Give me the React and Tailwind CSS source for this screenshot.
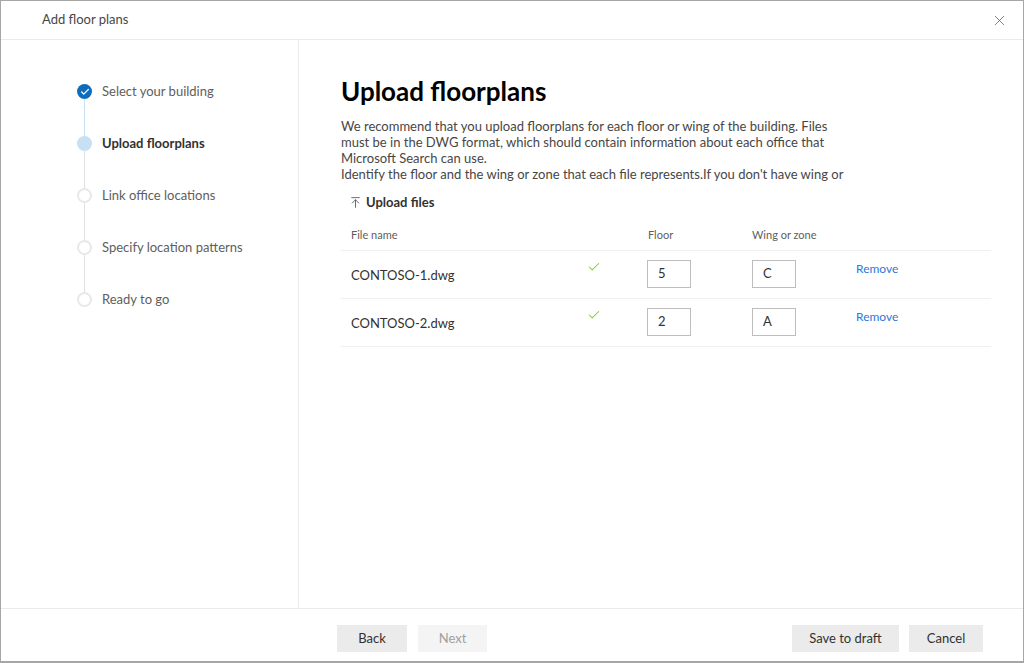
import { X, Check, ArrowUpToLine } from 'lucide-react'

const steps = [
  { label: 'Select your building', state: 'done' },
  { label: 'Upload floorplans', state: 'current' },
  { label: 'Link office locations', state: 'todo' },
  { label: 'Specify location patterns', state: 'todo' },
  { label: 'Ready to go', state: 'todo' },
]

const files = [
  { name: 'CONTOSO-1.dwg', floor: '5', wing: 'C' },
  { name: 'CONTOSO-2.dwg', floor: '2', wing: 'A' },
]

const intro = [
  'We recommend that you upload floorplans for each floor or wing of the building. Files',
  'must be in the DWG format, which should contain information about each office that',
  'Microsoft Search can use.',
  "Identify the floor and the wing or zone that each file represents.If you don't have wing or",
]

function StepDot({ state }) {
  if (state === 'done') {
    return (
      <div className="w-[15px] h-[15px] rounded-full bg-[#0f6cbd] flex items-center justify-center">
        <Check size={10} strokeWidth={3} className="text-white" />
      </div>
    )
  }
  if (state === 'current') {
    return <div className="w-[15px] h-[15px] rounded-full bg-[#c7e0f4]" />
  }
  return <div className="w-[15px] h-[15px] rounded-full border-2 border-[#e8e8e8] bg-white" />
}

export default function App() {
  return (
    <div
      className="w-[1024px] h-[663px] bg-white border border-b-2 border-[#a6a6a6] flex flex-col text-[#323130] overflow-hidden"
      style={{ fontFamily: '"Segoe UI", Lato, "Liberation Sans", sans-serif' }}
    >
      <div className="h-[39px] shrink-0 flex items-center justify-between pl-[41px] pr-[15px] border-b border-[#ebebeb]">
        <span className="text-[13px] text-[#484644]">Add floor plans</span>
        <X size={17} strokeWidth={1.1} className="text-[#605e5c]" />
      </div>

      <div className="flex flex-1 min-h-0">
        <div className="w-[298px] shrink-0 border-r border-[#ebebeb] pl-[76px] pt-[44px]">
          {steps.map((s, i) => (
            <div key={s.label} className="flex">
              <div className="flex flex-col items-center w-[15px]">
                <StepDot state={s.state} />
                {i < steps.length - 1 && (
                  <div className={`w-px h-[37px] ${i === 0 ? 'bg-[#c7e0f4]' : 'bg-[#e1e1e1]'}`} />
                )}
              </div>
              <span
                className={`ml-[10px] text-[13px] leading-[15px] ${
                  s.state === 'current' ? 'text-[#323130] font-bold' : 'text-[#605e5c]'
                }`}
              >
                {s.label}
              </span>
            </div>
          ))}
        </div>

        <div className="flex-1 pl-[42px] pr-[32px] pt-[36px]">
          <h1 className="text-[26px] font-bold text-black leading-[30px]">Upload floorplans</h1>
          <p className="mt-[12px] text-[13px] leading-[16px] text-[#484644] whitespace-nowrap">
            {intro.map((line) => (
              <span key={line} className="block">{line}</span>
            ))}
          </p>
          <button className="mt-[11px] ml-[8px] flex items-center gap-[4px] text-[13px] font-bold text-[#323130]">
            <ArrowUpToLine size={13} strokeWidth={1.3} />
            Upload files
          </button>

          <div className="mt-[15px]">
            <div className="flex items-center h-[16px] text-[11px] text-[#605e5c]">
              <span className="pl-[10px] w-[307px]">File name</span>
              <span className="w-[104px]">Floor</span>
              <span>Wing or zone</span>
            </div>
            <div className="border-b border-[#f0f0f0] mt-[6px]" />
            {files.map((f) => (
              <div key={f.name} className="flex items-center h-[48px] border-b border-[#f0f0f0]">
                <span className="pl-[10px] w-[246px] text-[13px] text-[#323130] pt-[4px]">{f.name}</span>
                <div className="w-[60px] self-start pt-[9px]">
                  <Check size={14} strokeWidth={1.8} className="text-[#7ed321]" />
                </div>
                <div className="w-[105px]">
                  <div className="w-[44px] h-[28px] border border-[#bdbdbd] flex items-center pl-[10px] text-[13px] text-[#323130]">
                    {f.floor}
                  </div>
                </div>
                <div className="w-[104px]">
                  <div className="w-[44px] h-[28px] border border-[#bdbdbd] flex items-center pl-[10px] text-[13px] text-[#323130]">
                    {f.wing}
                  </div>
                </div>
                <span className="self-start pt-[9px] text-[12px] text-[#2f78d8]">Remove</span>
              </div>
            ))}
          </div>
        </div>
      </div>

      <div className="h-[53px] shrink-0 border-t border-[#ebebeb] flex items-start pt-[16px] pl-[336px] pr-[40px]">
        <button className="w-[70px] h-[27px] bg-[#ebebeb] text-[13px] text-[#323130]">Back</button>
        <button className="ml-[11px] w-[69px] h-[27px] bg-[#f4f4f4] text-[13px] text-[#a19f9d]">Next</button>
        <div className="flex-1" />
        <button className="w-[107px] h-[27px] bg-[#ebebeb] text-[13px] text-[#323130]">Save to draft</button>
        <button className="ml-[10px] w-[74px] h-[27px] bg-[#ebebeb] text-[13px] text-[#323130]">Cancel</button>
      </div>
    </div>
  )
}
